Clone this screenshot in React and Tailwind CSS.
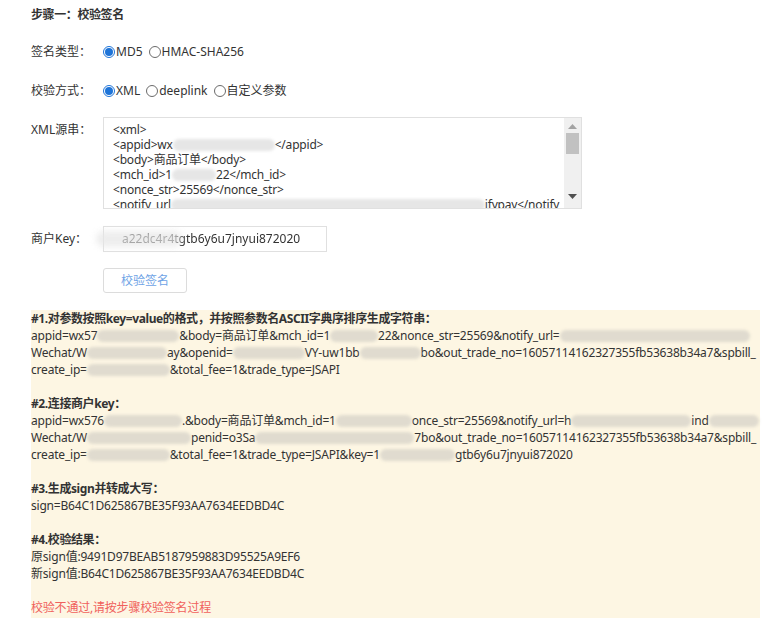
import React from "react";

const B = ({ c }) => (
  <span className={`inline-block align-middle h-[12px] -mt-[2px] rounded-full bg-[#e0dbcf] blur-[1.5px] ${c}`} />
);
const W = ({ c }) => (
  <span className={`inline-block align-middle h-[12px] -mt-[2px] rounded-full bg-[#e6e6e6] blur-[1.5px] ${c}`} />
);

const Radio = ({ checked, label }) => (
  <span className="inline-flex items-center mr-[6px]">
    {checked ? (
      <span className="w-[12px] h-[12px] rounded-full border border-[#1e74d8] bg-white flex items-center justify-center">
        <span className="w-[8px] h-[8px] rounded-full bg-[#1e74d8]" />
      </span>
    ) : (
      <span className="w-[12px] h-[12px] rounded-full border border-[#6b6b6b] bg-white" />
    )}
    <span className="ml-[1px]">{label}</span>
  </span>
);

export default function App() {
  return (
    <div
      className="bg-white text-[#333] text-[12px] pl-[31px] pt-[6px] min-h-[618px] overflow-hidden"
      style={{ fontFamily: '"Noto Sans", "Noto Sans CJK SC", sans-serif' }}
    >
      <div className="font-bold leading-[18px] tracking-[-0.4px]">步骤一：校验签名</div>

      <div className="mt-[18px] h-[20px] flex items-center">
        <div className="w-[72px]">签名类型：</div>
        <Radio checked label="MD5" />
        <Radio label="HMAC-SHA256" />
      </div>

      <div className="mt-[19px] h-[20px] flex items-center">
        <div className="w-[72px]">校验方式：</div>
        <Radio checked label="XML" />
        <Radio label="deeplink" />
        <Radio label="自定义参数" />
      </div>

      <div className="mt-[16px] flex">
        <div className="w-[72px] pt-[4px] leading-[17px]">XML源串：</div>
        <div className="w-[479px] h-[92px] border border-[#e0e0e0] flex overflow-hidden">
          <div className="flex-1 pl-[9px] pt-[4px] leading-[15px] tracking-[-0.2px] overflow-hidden whitespace-nowrap">
            <div>&lt;xml&gt;</div>
            <div>
              &lt;appid&gt;wx
              <W c="w-[102px]" />
              &lt;/appid&gt;
            </div>
            <div>&lt;body&gt;商品订单&lt;/body&gt;</div>
            <div>
              &lt;mch_id&gt;1
              <W c="w-[44px]" />
              22&lt;/mch_id&gt;
            </div>
            <div>&lt;nonce_str&gt;25569&lt;/nonce_str&gt;</div>
            <div>
              &lt;notify_url
              <W c="w-[314px]" />
              ifypay&lt;/notify_url&gt;
            </div>
          </div>
          <div className="w-[17px] bg-[#f0f0f0] flex flex-col items-center">
            <svg width="9" height="5" viewBox="0 0 9 5" className="mt-[6px]">
              <path d="M0 5 L4.5 0 L9 5 Z" fill="#a3a3a3" />
            </svg>
            <div className="w-[13px] h-[21px] bg-[#c1c1c1] mt-[4px]" />
            <div className="flex-1" />
            <svg width="9" height="5" viewBox="0 0 9 5" className="mb-[9px]">
              <path d="M0 0 L9 0 L4.5 5 Z" fill="#505050" />
            </svg>
          </div>
        </div>
      </div>

      <div className="mt-[17px] flex items-center">
        <div className="w-[72px]">商户Key：</div>
        <div className="relative w-[224px] h-[26px] border border-[#e0e0e0] flex items-center pl-[18px] whitespace-nowrap">
          <span className="blur-[0.5px]">a22dc4r4tgtb6y6u7jnyui872020</span>
          <span className="absolute left-[-8px] top-[4px] w-[86px] h-[16px] rounded-full bg-[#e6e6e6] blur-[3px] opacity-70" />
        </div>
      </div>

      <div className="mt-[16px] ml-[72px] w-[84px] h-[25px] border border-[#dcdcdc] rounded-[3px] flex items-center justify-center text-[#6ea3e6]">
        校验签名
      </div>

      <div className="mt-[17px] w-[729px] bg-[#fdf6e3] leading-[17px] tracking-[-0.2px] whitespace-nowrap pb-[12px]">
        <div className="font-bold tracking-[-0.4px]">#1.对参数按照key=value的格式，并按照参数名ASCII字典序排序生成字符串：</div>
        <div>
          appid=wx57
          <B c="w-[82px]" />
          &amp;body=商品订单&amp;mch_id=1
          <B c="w-[48px]" />
          22&amp;nonce_str=25569&amp;notify_url=
          <B c="w-[190px]" />
        </div>
        <div>
          Wechat/W
          <B c="w-[80px]" />
          ay&amp;openid=
          <B c="w-[72px]" />
          VY-uw1bb
          <B c="w-[61px]" />
          bo&amp;out_trade_no=16057114162327355fb53638b34a7&amp;spbill_
        </div>
        <div>
          create_ip=
          <B c="w-[83px]" />
          &amp;total_fee=1&amp;trade_type=JSAPI
        </div>
        <div className="h-[17px]" />
        <div className="font-bold tracking-[-0.4px]">#2.连接商户key：</div>
        <div>
          appid=wx576
          <B c="w-[78px]" />
          .&amp;body=商品订单&amp;mch_id=1
          <B c="w-[76px]" />
          once_str=25569&amp;notify_url=h
          <B c="w-[120px]" />
          ind
          <B c="w-[50px]" />
        </div>
        <div>
          Wechat/W
          <B c="w-[104px]" />
          penid=o3Sa
          <B c="w-[159px]" />
          7bo&amp;out_trade_no=16057114162327355fb53638b34a7&amp;spbill_
        </div>
        <div>
          create_ip=
          <B c="w-[83px]" />
          &amp;total_fee=1&amp;trade_type=JSAPI&amp;key=1
          <B c="w-[75px]" />
          gtb6y6u7jnyui872020
        </div>
        <div className="h-[17px]" />
        <div className="font-bold tracking-[-0.4px]">#3.生成sign并转成大写：</div>
        <div>sign=B64C1D625867BE35F93AA7634EEDBD4C</div>
        <div className="h-[17px]" />
        <div className="font-bold tracking-[-0.4px]">#4.校验结果：</div>
        <div>原sign值:9491D97BEAB5187959883D95525A9EF6</div>
        <div>新sign值:B64C1D625867BE35F93AA7634EEDBD4C</div>
        <div className="h-[17px]" />
        <div className="text-[#f0615c]">校验不通过,请按步骤校验签名过程</div>
      </div>
    </div>
  );
}
